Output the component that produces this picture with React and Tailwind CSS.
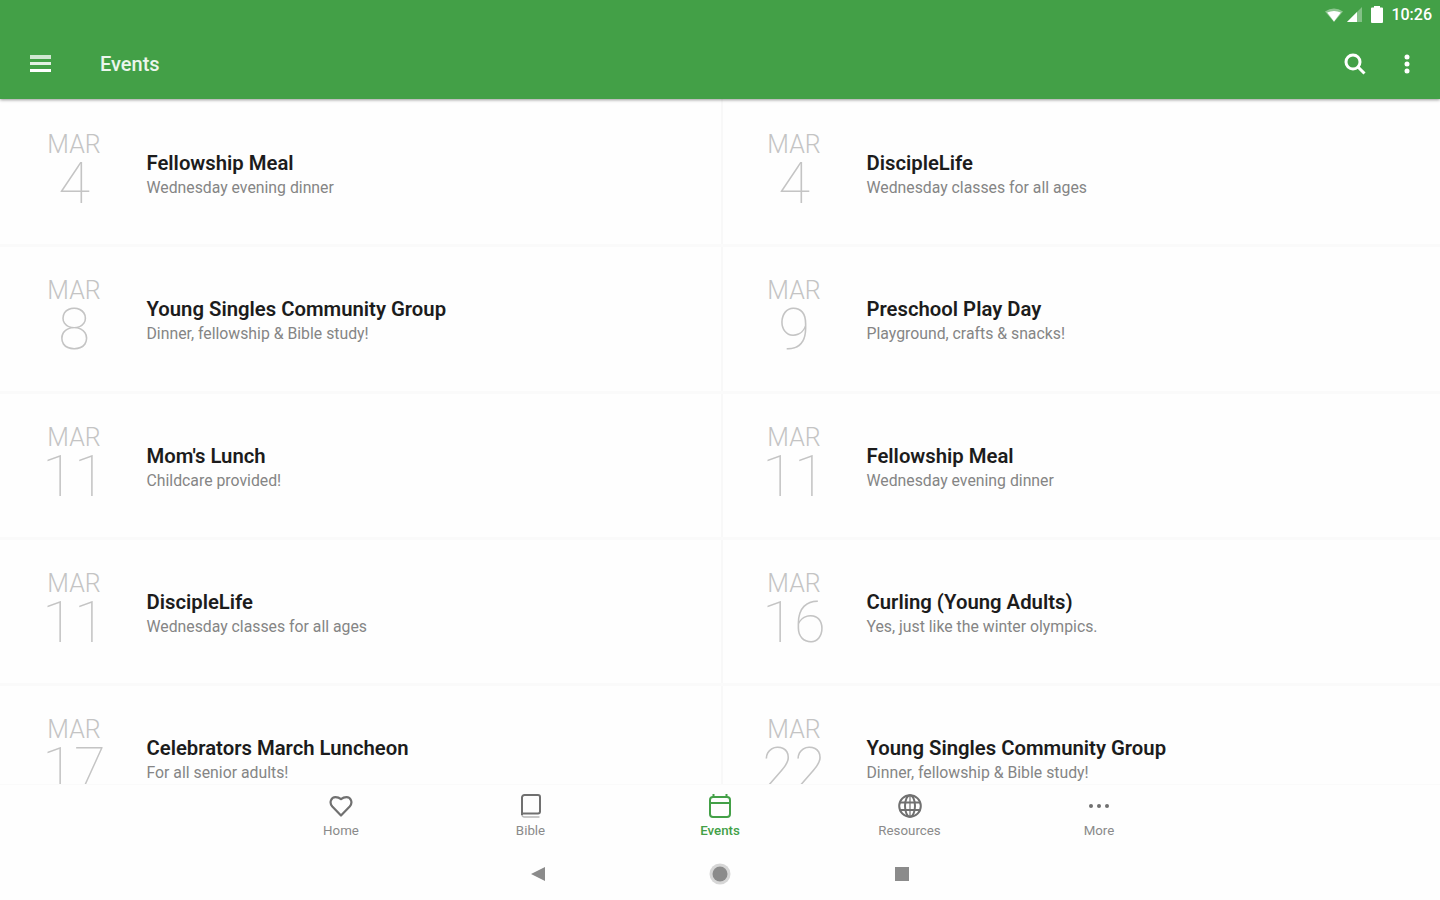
const events = [
  { month: "MAR", day: "4", title: "Fellowship Meal", text: "Wednesday evening dinner" },
  { month: "MAR", day: "4", title: "DiscipleLife", text: "Wednesday classes for all ages" },
  { month: "MAR", day: "8", title: "Young Singles Community Group", text: "Dinner, fellowship & Bible study!" },
  { month: "MAR", day: "9", title: "Preschool Play Day", text: "Playground, crafts & snacks!" },
  { month: "MAR", day: "11", title: "Mom's Lunch", text: "Childcare provided!" },
  { month: "MAR", day: "11", title: "Fellowship Meal", text: "Wednesday evening dinner" },
  { month: "MAR", day: "11", title: "DiscipleLife", text: "Wednesday classes for all ages" },
  { month: "MAR", day: "16", title: "Curling (Young Adults)", text: "Yes, just like the winter olympics." },
  { month: "MAR", day: "17", title: "Celebrators March Luncheon", text: "For all senior adults!" },
  { month: "MAR", day: "22", title: "Young Singles Community Group", text: "Dinner, fellowship & Bible study!" },
];

function HeartIcon() {
  return (
    <svg viewBox="0 0 24 24" className="h-6 w-6" fill="none" stroke="currentColor" strokeWidth="2.2" strokeLinejoin="round">
      <path d="M12 21.500 3.300 12.500C-.2 8.500 2.200 3.200 6.500 3.200c2.300 0 3.800.6 5.500 2 1.700-1.400 3.200-2 5.500-2 4.300 0 6.700 5.300 3.200 9.300z" />
    </svg>
  );
}

function BookIcon() {
  return (
    <svg viewBox="0 0 24 24" className="h-6 w-6" fill="none" stroke="currentColor" strokeWidth="2">
      <path d="M3 21V3.500A2.500 2.500 0 0 1 5.500 1H19a2 2 0 0 1 2 2v14.500a2 2 0 0 1-2 2H3.500" />
      <path d="M3 20.500A2.300 2.300 0 0 0 5.300 23H20.500" strokeWidth="1.500" opacity="0.5" />
    </svg>
  );
}

function CalendarIcon() {
  return (
    <svg viewBox="0 0 24 24" className="h-6 w-6" fill="none" stroke="currentColor" strokeWidth="2">
      <rect x="2" y="3" width="20" height="20" rx="3" />
      <path d="M2 9h20" />
      <path d="M5.500 0v4M18.500 0v4" />
    </svg>
  );
}

function GlobeIcon() {
  return (
    <svg viewBox="0 0 24 24" className="h-6 w-6" fill="none" stroke="currentColor" strokeWidth="2">
      <circle cx="12" cy="12" r="10.800" />
      <ellipse cx="12" cy="12" rx="5" ry="10.800" />
      <path d="M2 8.500h20M2 16h20" />
      <path d="M12 1v22" strokeWidth="1.200" />
    </svg>
  );
}

function MoreIcon() {
  return (
    <svg viewBox="0 0 24 24" className="h-6 w-6" fill="currentColor">
      <circle cx="4" cy="12" r="2" />
      <circle cx="12" cy="12" r="2" />
      <circle cx="20" cy="12" r="2" />
    </svg>
  );
}

const tabs = [
  { label: "Home", Icon: HeartIcon },
  { label: "Bible", Icon: BookIcon },
  { label: "Events", Icon: CalendarIcon, active: true },
  { label: "Resources", Icon: GlobeIcon },
  { label: "More", Icon: MoreIcon },
];

function StatusBar() {
  return (
    <div className="flex h-[29px] items-center justify-end pr-[8px] text-white">
      <svg viewBox="0 0 18 14" className="h-[14px] w-[18px]" fill="currentColor">
        <path d="M0 3.500Q9-2.500 18 3.500L9 14z" opacity="0.4" />
        <path d="M2.200 4.500Q9 1.500 15.800 4.500L9 13.500z" />
      </svg>
      <svg viewBox="0 0 15 15" className="ml-[4px] h-[15px] w-[15px]" fill="currentColor">
        <path d="M15 0v15H0z" opacity="0.35" />
        <path d="M10 5v10H0z" />
      </svg>
      <svg viewBox="0 0 12 17" className="ml-[9px] h-[17px] w-[12px]" fill="currentColor">
        <path d="M3 0h6v1.500h2a1 1 0 0 1 1 1V16a1 1 0 0 1-1 1H1a1 1 0 0 1-1-1V2.500a1 1 0 0 1 1-1h2z" />
      </svg>
      <span className="ml-[8px] text-[16px] leading-none font-medium">10:26</span>
    </div>
  );
}

function EventCard({ event }) {
  return (
    <div className="flex h-[146.25px] border-b-3 border-[#fafafa]">
      <div className="ml-[34px] w-[80px] shrink-0 pt-[31px] text-center text-[#c4c4c4]">
        <div className="h-[25px] text-[25px] leading-[25px] font-light">{event.month}</div>
        <div className="h-[50px] text-[58px] leading-[52px] font-thin">{event.day}</div>
      </div>
      <div className="ml-[32.5px] pt-[49px]">
        <h2 className="text-[20.3px] leading-[26px] font-semibold text-[#1c1c1c]">{event.title}</h2>
        <p className="text-[15.8px] leading-[23px] text-[#858585]">{event.text}</p>
      </div>
    </div>
  );
}

export default function App() {
  return (
    <div className="flex h-[900px] w-[1440px] flex-col overflow-hidden bg-[#fefefe] font-[Roboto,sans-serif]">
      <header className="z-10 h-[99px] shrink-0 bg-[#43a047] shadow-[0_1px_3px_rgba(0,0,0,0.4)]">
        <StatusBar />
        <div className="flex h-[70px] items-center pr-[30px] pl-[30px] text-white">
          <button aria-label="Menu" className="mb-[2px] flex h-[17px] w-[21px] flex-col justify-between">
            <span className="h-[4px] w-full bg-white/75" />
            <span className="h-[3px] w-full bg-white/85" />
            <span className="h-[3px] w-full bg-white" />
          </button>
          <h1 className="ml-[49px] text-[20px] font-medium text-white/90">Events</h1>
          <svg viewBox="0 0 22 22" className="ml-auto h-[22px] w-[22px]" fill="none" stroke="currentColor" strokeWidth="3">
            <circle cx="9" cy="9" r="7" />
            <path d="m14 14 6.500 6.500" />
          </svg>
          <svg viewBox="0 0 6 20" className="ml-[38px] h-[20px] w-[6px]" fill="currentColor">
            <circle cx="3" cy="3" r="2.500" />
            <circle cx="3" cy="10" r="2.500" />
            <circle cx="3" cy="17" r="2.500" />
          </svg>
        </div>
      </header>

      <main className="grid h-[685px] shrink-0 grid-cols-2 content-start overflow-hidden bg-[linear-gradient(#f8f8f8,#f8f8f8)] bg-[size:2px_100%] bg-[position:721px_0] bg-no-repeat pt-[2px]">
        {events.map((event, i) => (
          <EventCard key={i} event={event} />
        ))}
      </main>

      <nav className="flex h-[62px] shrink-0 justify-center border-t border-[#fafafa]">
        {tabs.map(({ label, Icon, active }) => (
          <button key={label} className={active ? "flex w-[189.5px] flex-col items-center pt-[9px] text-[#43a047]" : "flex w-[189.5px] flex-col items-center pt-[9px] text-[#707070]"}>
            <Icon />
            <span className={active ? "mt-[4px] text-[13.3px] leading-[18px] font-medium" : "mt-[4px] text-[13.3px] leading-[18px] text-[#8a8a8a]"}>{label}</span>
          </button>
        ))}
      </nav>

      <div className="flex h-[55px] shrink-0 items-center justify-center gap-[164px] text-[#8b8b8b]">
        <svg viewBox="0 0 14 14" className="h-[14px] w-[14px]" fill="currentColor">
          <path d="M14 0v14L0 7z" />
        </svg>
        <svg viewBox="0 0 22 22" className="h-[22px] w-[22px]" fill="currentColor">
          <circle cx="11" cy="11" r="10.500" opacity="0.35" />
          <circle cx="11" cy="11" r="7.500" />
        </svg>
        <svg viewBox="0 0 14 14" className="h-[14px] w-[14px]" fill="currentColor">
          <path d="M0 0h14v14H0z" />
        </svg>
      </div>
    </div>
  );
}
